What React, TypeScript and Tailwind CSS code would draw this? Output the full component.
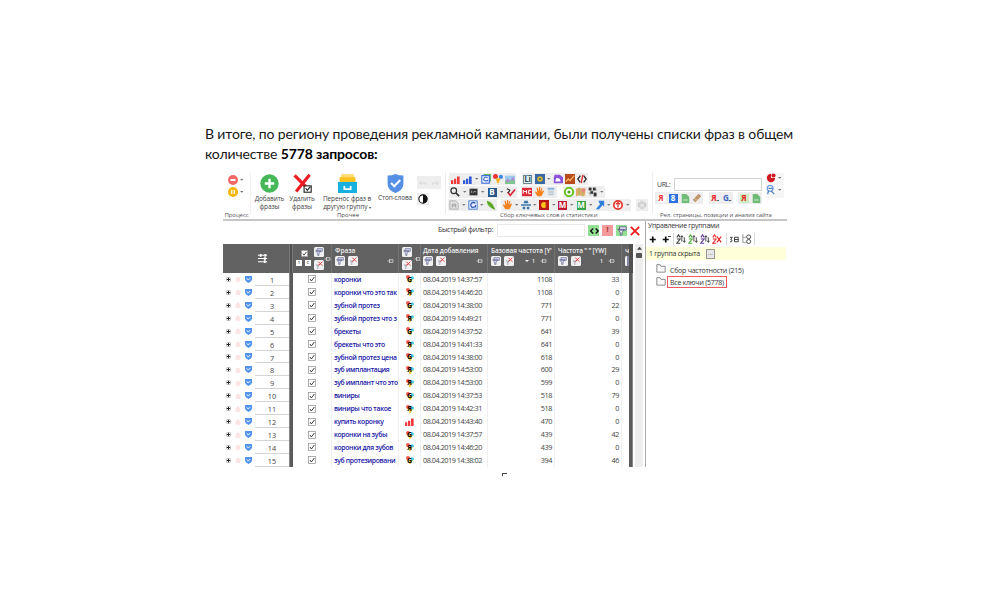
import React from 'react';

type Kids = { children?: React.ReactNode; className?: string };

const rows: [string, string, string, string, string][] = [
  ['коронки', 'G', '14:37:57', '1108', '33'],
  ['коронки что это так', 'Я', '14:46:20', '1108', '0'],
  ['зубной протез', 'G', '14:38:00', '771', '22'],
  ['зубной протез что з', 'Я', '14:49:21', '771', '0'],
  ['брекеты', 'G', '14:37:52', '641', '39'],
  ['брекеты что это', 'Я', '14:41:33', '641', '0'],
  ['зубной протез цена', 'G', '14:38:00', '618', '0'],
  ['зуб имплантация', 'Я', '14:53:00', '600', '29'],
  ['зуб имплант что это', 'Я', '14:53:00', '599', '0'],
  ['виниры', 'G', '14:37:53', '518', '79'],
  ['виниры что такое', 'Я', '14:42:31', '518', '0'],
  ['купить коронку', 'bars', '14:43:40', '470', '0'],
  ['коронки на зубы', 'G', '14:37:57', '439', '42'],
  ['коронки для зубов', 'Я', '14:46:20', '439', '0'],
  ['зуб протезировани', 'G', '14:38:02', '394', '46'],
];

const Svg = ({ children, className = 'size-[10px]' }: Kids) => (
  <svg viewBox="0 0 12 12" className={`block shrink-0 ${className}`} fill="none">{children}</svg>
);
const Slot = ({ children }: Kids) => <span className="flex w-3 shrink-0 items-center justify-center">{children}</span>;
const Caret = () => (
  <span className="flex w-[6.5px] shrink-0 items-center justify-center">
    <Svg className="size-[3.5px]"><path d="M0 3h12L6 9z" fill="#777" /></Svg>
  </span>
);
const Group = ({ children, className = '' }: Kids) => (
  <div className={`flex h-[12px] items-center bg-[#eeeeee] ${className}`}>{children}</div>
);
const Letter = ({ children, className = '' }: Kids) => (
  <span className={`flex size-[9px] items-center justify-center text-[8px] leading-none font-bold ${className}`}>{children}</span>
);
const Bars = ({ color = '#f03a3a' }: { color?: string }) => (
  <Svg className="size-[9px]"><path d="M0 12V7h3v5zM4 12V5h3v7zM8 12V2h3.5v10z" fill={color} /></Svg>
);
const Hand = () => (
  <Svg><path d="M4 11L1 6l1-1 2 2-1-6h1.5L6 5V0h1.5v5L9 1l1 .5L9 6l2-2 1 1-3 6z" fill="#f58220" /></Svg>
);
const Page = ({ color = '#6dbb74' }: { color?: string }) => (
  <Svg className="size-[9px]"><path d="M1 0h6l4 4v8H1z" fill={color} /><path d="M3 8h6" stroke="#d8f4dc" strokeWidth="1.2" /></Svg>
);
const Shield = ({ className = '' }: Kids) => (
  <Svg className={className}>
    <path d="M1 1Q4 1 6 0q2 1 5 1v5c0 3-2 5-5 6-3-1-5-3-5-6z" fill="#5590e4" />
    <path d="M3.2 5.7l2 2L9 3.8" stroke="white" strokeWidth="1.3" />
  </Svg>
);
const RowShield = () => (
  <Svg className="size-[7px]">
    <path d="M0 0h12v6q0 3-6 6-6-3-6-6z" fill="#5193ef" />
    <path d="M3 4l2.5 3L9 3.5" stroke="white" strokeWidth="1.6" />
  </Svg>
);
const Sep = ({ className = '' }: Kids) => <div className={`w-px shrink-0 bg-[#d8d8d8] ${className}`} />;

const Funnel = () => (
  <span className="flex size-[10px] shrink-0 items-center justify-center rounded-[1.5px] bg-[#f0f0f0]">
    <Svg className="size-[8px]"><path d="M3 1h8v4H3zM1 4h8L6 8v3H4V8z" fill="#d5d8f3" stroke="#62658a" strokeWidth="1" /></Svg>
  </span>
);
const FunnelOff = () => (
  <span className="flex size-[10px] shrink-0 items-center justify-center rounded-[1.5px] bg-[#f0f0f0]">
    <Svg className="size-[8px]"><path d="M1 5h7L5 9v3H3V9z" fill="#b9bbc6" /><path d="M5 1l6 6M11 1L5 7" stroke="#e84040" strokeWidth="1.5" /></Svg>
  </span>
);
const Pin = ({ className = '' }: Kids) => (
  <Svg className={`h-[6px] w-[7px] ${className}`}><path d="M0 6h4M4 2v8M4 3.5h7v5H4" stroke="#e0e0e0" strokeWidth="1.5" /></Svg>
);
const Check = ({ className = 'size-[8px]' }: Kids) => (
  <Svg className={className}><rect x=".6" y=".6" width="10.8" height="10.8" fill="white" stroke="#888" /><path d="M3 6l2 3 4.5-6" stroke="#333" strokeWidth="1.4" /></Svg>
);

function IconRows() {
  return (
    <div className="flex flex-col">
      <div className="flex pl-[3px]">
        <Group>
          <Slot><Bars /></Slot><Slot><Bars color="#2f59d8" /></Slot><Caret />
          <Slot><Svg><path d="M3 1h8v8" stroke="#65b96a" strokeWidth="2" /><rect x="1" y="2" width="9" height="9" fill="white" stroke="#2f62d8" strokeWidth="1.3" /><path d="M8 5Q5 2 3.5 5.5T8 8V7" stroke="#3767cf" strokeWidth="1.4" /></Svg></Slot>
          <Slot><Svg><circle cx="3" cy="3" r="3" fill="#e33" /><circle cx="9.5" cy="3.5" r="2.5" fill="#3689e6" /><path d="M3 5h6L7 11H5z" fill="#f6b52b" /></Svg></Slot>
          <Slot><Svg><rect y="2" width="12" height="9" fill="#9ccbf1" /><path d="M0 10l3-5 3 3 4-5 2 7z" fill="#ac8bce" /><path d="M0 8l4 2 4-3 4 2v3H0z" fill="#7fc58e" /></Svg></Slot>
        </Group>
        <Group className="ml-[6px]">
          <Slot><Letter className="border border-[#6b8792] bg-[#e2eff1] text-[7px] tracking-[-.3px] text-[#284c5a]">Li</Letter></Slot>
          <Slot><Svg><rect width="12" height="12" fill="#3868a5" /><circle cx="6" cy="6" r="3.3" fill="#d7b42e" /><circle cx="6" cy="6" r="1.3" fill="#476c70" /></Svg></Slot><Caret />
          <Slot><Svg><path d="M2 1h6l4 3v7H1V4z" fill="#8b54d9" /><path d="M3 8q0-4 3-3 3 0 3 4H3z" fill="white" /></Svg></Slot>
          <Slot><Svg><rect width="12" height="12" fill="#b94a1c" /><path d="M1 9l3-3 2 2 5-6" stroke="#ffbc66" strokeWidth="1.5" /></Svg></Slot>
          <Slot><Svg><path d="M4 2L1 6l3 4M8 2l3 4-3 4" stroke="#222" strokeWidth="1.5" /><path d="M7 1L5 11" stroke="#e12c2c" strokeWidth="1.6" /></Svg></Slot>
        </Group>
      </div>
      <div className="mt-[1px] flex pl-[3px]">
        <Group>
          <Slot><Svg><circle cx="4.5" cy="4.5" r="3.4" stroke="#333" strokeWidth="1.5" /><path d="M7 7l4 4" stroke="#333" strokeWidth="2" /></Svg></Slot><Caret />
          <Slot><Svg className="h-[8px] w-[9px]"><rect y="1" width="12" height="10" fill="#333" /><path d="M2 4l2 1.5L2 7M5 7l3-2 2 1" stroke="#ddd" /></Svg></Slot><Caret />
          <Slot><Letter className="bg-[#28578c] text-[8px] text-white">B</Letter></Slot><Caret />
          <Slot><Svg><path d="M2 6l3 4 6-7" stroke="#d4253b" strokeWidth="2" /><path d="M1 2l4 2M5 4l-3 3" stroke="#333" strokeWidth="1.4" /></Svg></Slot>
        </Group>
        <Group className="ml-[4px]">
          <Slot><Svg><rect y="1" width="12" height="10" fill="#df2936" /><path d="M1.500 8V4l2 2 2-2v4M11 4H8v4h3" stroke="white" strokeWidth="1.2" /></Svg></Slot>
          <Slot><Hand /></Slot>
          <Slot><Svg><rect x="2" y="1" width="8" height="10" fill="#dfe5ea" /><path d="M2 2h8" stroke="#7eb0d9" strokeWidth="2" /><path d="M3 5h6M3 7h6M3 9h6" stroke="#b5bec6" /></Svg></Slot>
        </Group>
        <Group className="ml-[6px]">
          <Slot><Svg><circle cx="6" cy="6" r="5" fill="white" stroke="#67c31d" strokeWidth="2.3" /><circle cx="6" cy="6" r="1.8" fill="#48a51d" /></Svg></Slot>
          <Slot><Svg><path d="M0 2l4-1 4 1 3-1v9l-3 1-4-1-4 1z" fill="#e3ac69" /><path d="M4 1v9M8 2v9" stroke="#9bb85e" /><circle cx="9" cy="4" r="2.5" fill="#e68a7d" /></Svg></Slot>
          <Slot><Svg><path d="M1 1h3v3H1zM6 1h3v3H6zM3 5h3v3H3zM7 7h3v4H7zM1 6l2 4M9 3l2 1" fill="#333" stroke="#444" strokeWidth=".5" /></Svg></Slot><Caret />
        </Group>
      </div>
      <div className="mt-px flex pl-[2px]">
        <Group>
          <Slot><Svg><path d="M1 1h7l3 3v7H1z" stroke="#aaa" fill="#e1e1e1" /><path d="M4 9V5h4v4M4 7h4" stroke="#999" /></Svg></Slot><Caret />
          <Slot><Svg><rect x="1" y="1" width="10" height="10" fill="#eaf0ff" stroke="#386fd0" /><path d="M9 4Q6 2 4 4t1 5l4-1V6" stroke="#315cbb" strokeWidth="1.5" /></Svg></Slot><Caret />
          <Slot><Svg><path d="M1 1q5 1 7 4t3 7Q1 9 1 1" fill="#69b82f" /><path d="M2 2l8 9" stroke="#3e8920" /></Svg></Slot>
        </Group>
        <Group className="ml-[4px]">
          <Slot><Hand /></Slot><Caret />
          <Slot><Svg><path d="M3 4l1-3h4l1 3zM0 5h12v2H0zM2 8h3v3H2zM7 8h3v3H7z" fill="#3d79ad" /></Svg></Slot><Caret />
          <Slot><Svg><rect width="12" height="12" fill="#b41616" /><circle cx="6" cy="6" r="3.5" fill="#ffc21b" /><path d="M8 2h4v8H8z" fill="#bf1d17" /></Svg></Slot><Caret />
          <Slot><Letter className="bg-[#bd1731] text-white">M</Letter></Slot><Caret />
          <Slot><Letter className="bg-[#36a545] text-white">M</Letter></Slot><Caret />
          <Slot><Svg><path d="M4 1h7v7L9 6l-4 5H1l5-6z" fill="#2d80dc" /></Svg></Slot><Caret />
          <Slot><Svg><circle cx="6" cy="6" r="5" fill="white" stroke="#e33429" strokeWidth="2" /><path d="M6 9V3M3.500 5L6 3l2.500 2" stroke="#e33429" strokeWidth="1.5" /></Svg></Slot><Caret />
        </Group>
        <Group className="ml-[5px]">
          <Slot><Svg><rect x="1" y="3" width="10" height="6" rx="2" fill="#c9c9c9" /><path d="M4 1h4v10H4z" fill="#d4d4d4" /><path d="M3 5h6v3H3z" fill="#e6e6e6" /></Svg></Slot>
        </Group>
      </div>
    </div>
  );
}

function Toolbar() {
  return (
    <div className="flex h-[49px] border-b-2 border-[#c6c6c6] text-[6.5px] leading-[8px] text-[#444]">
      <div className="flex w-[27px] flex-col pt-[3px]">
        <div className="flex pl-[5px]"><Svg><circle cx="6" cy="6" r="6" fill="#f26767" /><path d="M3 6h6" stroke="white" strokeWidth="2.4" /></Svg><span className="flex items-center"><Caret /></span></div>
        <div className="mt-[2px] flex pl-[5px]"><Svg><circle cx="6" cy="6" r="6" fill="#f5b70d" /><path d="M4.5 3.500v5M7.500 3.500v5" stroke="white" strokeWidth="1.5" /></Svg><span className="flex items-center"><Caret /></span></div>
        <span className="mt-auto self-center text-[6px] tracking-[-.05px] text-[#555]">Процесс</span>
      </div>
      <Sep className="h-[42px] bg-[#f2f2f2]" />
      <div className="flex w-[194px] flex-col">
        <div className="flex h-[39px]">
          <div className="flex w-[37px] flex-col items-center pt-[2px] text-center">
            <Svg className="size-[19px]"><circle cx="6" cy="6" r="5.8" fill="#46b858" /><path d="M6 3v6M3 6h6" stroke="white" strokeWidth="1.5" /></Svg>
            <span className="mt-[2px] whitespace-nowrap tracking-[-.12px]">Добавить<br />фразы</span>
          </div>
          <div className="flex w-[28px] flex-col items-center pt-[2px] text-center">
            <Svg className="size-[19px]"><path d="M1 .8l9 9M10.5.5L2 11" stroke="#ed1c24" strokeWidth="2" /><rect x="7" y="7.500" width="4.500" height="4" fill="white" stroke="#222" strokeWidth=".7" /><path d="M8 9l1 1.300L11 8" stroke="#222" strokeWidth=".7" /></Svg>
            <span className="mt-[2px] tracking-[-.12px]">Удалить<br />фразы</span>
          </div>
          <div className="flex w-[62px] flex-col items-center pt-[2px] text-center">
            <Svg className="size-[19px]"><path d="M2 0h8v5H2z" fill="#ffdc78" /><path d="M1 2h10v3H1z" fill="#fbc31c" /><path d="M0 5h12v7H0z" fill="#18b1df" /><path d="M4 7.500v2h4v-2" stroke="white" strokeWidth="1.1" /></Svg>
            <span className="mt-[2px] whitespace-nowrap tracking-[-.1px]">Перенос фраз в<br />другую группу <span className="text-[4px]">▾</span></span>
          </div>
          <div className="flex w-[34px] flex-col items-center pt-[2px]">
            <Shield className="size-[19px]" />
            <span className="mt-[1px] whitespace-nowrap tracking-[-.12px]">Стоп-слова</span>
          </div>
          <div className="flex w-[33px] flex-col pt-[4px] pl-[5px]">
            <div className="flex h-[13px] w-[24px] items-center justify-around bg-[#eeeeee]">
              <Svg className="size-[8px]"><path d="M4 3L1 6l3 3M1 6h9v3" stroke="#cfcfcf" /></Svg><Svg className="size-[8px]"><path d="M8 3l3 3-3 3M11 6H2v3" stroke="#cfcfcf" /></Svg>
            </div>
            <div className="mt-[4px] flex size-[12px] items-center justify-center bg-[#eeeeee]"><Svg><circle cx="6" cy="6" r="5" fill="white" stroke="#111" strokeWidth="1.3" /><path d="M6 1a5 5 0 010 10z" fill="#111" /></Svg></div>
          </div>
        </div>
        <span className="pl-[86px] text-[6px]">Прочее</span>
      </div>
      <Sep className="h-[42px] bg-[#eeeeee]" />
      <div className="flex w-[206px] flex-col pt-[1px]">
        <IconRows />
        <span className="pl-[54px] text-[6px] tracking-[-.08px] whitespace-nowrap text-[#555]">Сбор ключевых слов и статистики</span>
      </div>
      <Sep className="h-[42px] bg-[#eeeeee]" />
      <div className="flex w-[133px] flex-col pt-[6px] pl-[4px]">
        <div className="flex"><span className="w-[17px] pt-[3px] text-[7px] tracking-[-.45px]">URL:</span><div className="h-[13px] w-[88px] border border-[#d4d4d4] bg-white" />
          <div className="-mt-[5px] ml-[4px] flex h-[25px] w-[18px] flex-col gap-[2px] bg-[#f6f6f6]">
            <span className="flex"><Svg><path d="M6 1a5 5 0 105 5H6z" fill="#cf1a22" /><circle cx="9" cy="3" r="2.500" fill="#cf1a22" /></Svg><span className="pt-[3px]"><Caret /></span></span>
            <span className="flex"><Svg><circle cx="5" cy="4" r="3.500" stroke="#6c9ce0" strokeWidth="1.500" /><path d="M3 4h5M6 7l4 4M3 7l-1 4" stroke="#517ebd" strokeWidth="1.500" /></Svg><span className="pt-[3px]"><Caret /></span></span>
          </div>
        </div>
        <div className="-mt-[6px] flex">
          <Group className="-ml-[2px]">
            <Slot><Letter className="rounded-full bg-white text-[#e73535]">Я</Letter></Slot><Slot><Letter className="bg-[#2d71df] text-white">8</Letter></Slot><Slot><Page /></Slot><Slot><Svg><path d="M1 8l7-7 3 3-7 7z" fill="#bd956b" /><path d="M3 6l3 3" stroke="#ead3ba" /></Svg></Slot>
          </Group>
          <Group className="ml-[6px]"><Slot><Letter className="text-[#e42626]">Я<span className="self-end text-[3px] text-black">••</span></Letter></Slot><Slot><Letter className="text-[#3e66c7]">G<span className="self-end text-[3px] text-black">••</span></Letter></Slot></Group>
          <Group className="ml-[5px]"><Slot><Letter className="bg-[#cee9bd] text-[#e42626]">Я</Letter></Slot><Slot><Page /></Slot></Group>
        </div>
        <span className="mt-auto pl-[3px] text-[6px] tracking-[-.12px] whitespace-nowrap text-[#555]">Рел. страницы, позиции и анализ сайта</span>
      </div>
    </div>
  );
}

const Tools = ({ children }: Kids) => <div className="mt-[1px] flex items-center gap-[3px]"><Funnel /><FunnelOff />{children}</div>;

function TableHeader() {
  return (
    <div className="flex h-[29px] bg-[#626262] text-[6.5px] leading-[8px] font-semibold text-[#f0f0f0]">
      <div className="flex w-[66px] items-center justify-center pl-[12px]"><Svg className="size-[11px]"><path d="M1 2.500h10M1 6h10M1 9.500h10" stroke="white" strokeWidth="1.200" /><path d="M4 1v3M8.500 4.500v3M8.500 8v3M9 1v3" stroke="white" strokeWidth="2" /></Svg></div>
      <div className="w-[4px] border-x border-[#777] bg-[#505050]" />
      <div className="flex w-[38px]">
        <div className="flex w-[18px] flex-col items-end gap-[3px] pt-[6px]">
          <Check className="mr-[3px] size-[7px]" />
          <div className="flex gap-[3px] text-[4px] leading-[6px] text-[#333]"><span className="size-[6px] bg-white text-center">1</span><span className="size-[6px] bg-white text-center">C</span></div>
        </div>
        <div className="ml-[2px] flex flex-col gap-[3px] pt-[3px] pl-[1px]"><Funnel /><FunnelOff /></div>
        <Pin className="mt-[12px]" />
      </div>
      <div className="flex w-[67px] flex-col border-l border-[#737373] pt-[3px] pl-[3px]"><span>Фраза</span><Tools><Pin className="ml-[26px]" /></Tools></div>
      <div className="flex w-[22px] border-l border-[#737373] pl-[3px]"><div className="flex flex-col gap-[3px] pt-[3px]"><Funnel /><FunnelOff /></div><Pin className="mt-[12px] ml-[2px]" /></div>
      <div className="flex w-[67px] flex-col border-l border-[#737373] pt-[3px] pl-[2px]"><span className="tracking-[-.1px]">Дата добавления</span><Tools><Pin className="ml-[27px]" /></Tools></div>
      <div className="flex w-[67px] flex-col border-l border-[#737373] pt-[3px] pl-[3px]"><span className="tracking-[-.12px] whitespace-nowrap">Базовая частота [Y'</span><Tools><span className="ml-[8px]"><Svg className="size-[4px]"><path d="M0 3h12L6 9z" fill="white" /></Svg></span><span className="text-[5px]">1</span><Pin className="ml-[2px]" /></Tools></div>
      <div className="flex w-[67px] flex-col border-l border-[#737373] pt-[3px] pl-[3px]"><span className="tracking-[-.18px] whitespace-nowrap">Частота " " [YW]</span><Tools><span className="ml-[16px] text-[5px]">1</span><Pin className="ml-[2px]" /></Tools></div>
      <div className="flex w-[8px] flex-col overflow-hidden border-l border-[#737373] pt-[3px] pl-[3px]"><span className="w-[4px]">ч</span><div className="mt-px h-[10px] w-[4px] rounded-l-[1.5px] border-l-2 border-[#f0f0f0] bg-[#8587a0]" /></div>
      <div className="w-[4px] bg-[#505050]" />
    </div>
  );
}

function Source({ name }: { name: string }) {
  if (name === 'bars') return <Bars />;
  return (
    <span className="grid size-[8px] place-items-center">
      <Svg className="col-start-1 row-start-1 size-[8px]"><circle cx="3" cy="3" r="3" fill="#f35b50" /><circle cx="9.500" cy="4.500" r="2.500" fill="#48cbe0" /><path d="M3 6h7l-3 6H5z" fill="#f9cf3d" /></Svg>
      <span className="col-start-1 row-start-1 text-[7px] leading-none font-bold text-black">{name}</span>
    </span>
  );
}

function TableRow({ row, index }: { row: (typeof rows)[number]; index: number }) {
  const [phrase, src, time, base, freq] = row;
  return (
    <div className="flex h-[12.93px] items-center text-[7.3px] leading-[13px] text-[#444]">
      <div className="flex h-full w-[66px] items-center">
        <div className="flex w-[32px] items-center gap-[4px] pl-[3px]">
          <Svg className="size-[5px]"><rect x="1" y="1" width="10" height="10" rx="3" stroke="#999" strokeWidth="1.500" /><path d="M6 2v8M2 6h8" stroke="#222" strokeWidth="2.400" /></Svg>
          <Svg className="size-[6px]"><path d="M2 5h8v6H2zM4 5V2h4v3" fill="#fde5e5" stroke="#fae0e0" strokeWidth="1.200" /></Svg>
          <RowShield />
        </div>
        <span className="h-full flex-1 border-b border-[#d4d4d4] text-center leading-[14px]">{index + 1}</span>
      </div>
      <div className="h-full w-[4px] border-l border-[#888] bg-[#5b5b5b]" />
      <div className="flex w-[38px] justify-center"><Check /></div>
      <div className="h-full w-[67px] border-l border-[#f0f0f0] pl-[2px]"><div className="w-[64px] text-[6.8px] font-semibold tracking-[-.32px] whitespace-nowrap text-[#2015a5]">{phrase}</div></div>
      <div className="flex h-full w-[22px] items-center justify-center border-l border-[#f0f0f0]"><Source name={src} /></div>
      <div className="h-full w-[67px] border-l border-[#f0f0f0] pl-[2px] tracking-[-.48px] whitespace-nowrap">08.04.2019 {time}</div>
      <div className="h-full w-[67px] border-l border-[#f0f0f0] pr-[2px] text-right tracking-[-.4px]">{base}</div>
      <div className="h-full w-[67px] border-l border-[#f0f0f0] pr-[2px] text-right tracking-[-.4px]">{freq}</div>
      <div className="h-full w-[8px] border-l border-[#f0f0f0]" />
      <div className="h-full w-[4px] border-r border-[#888] bg-[#5b5b5b]" />
    </div>
  );
}

function Groups() {
  return (
    <div className="w-[141px] border-l border-[#aaa] text-[7px] leading-[9px] text-[#333]">
      <div className="h-[10px] pl-[2px] tracking-[-.28px]">Управление группами</div>
      <div className="flex h-[16px] items-center gap-[2px] pl-[3px]">
        <Svg className="size-[9px]"><path d="M5 2v8M1 6h8" stroke="#111" strokeWidth="2.300" /></Svg>
        <Svg className="ml-[2px] size-[9px]"><path d="M5 2v8M1 6h8" stroke="#111" strokeWidth="2.300" /><path d="M8 2h4" stroke="#111" /></Svg>
        <Sep className="h-[12px]" />
        {['#444', '#49ad38', '#633c9f', '#e33'].map((color, i) => (
          <Svg key={color} className="size-[10px]"><path d="M1 4l2-3 2 3M1 6h4L1 11h4" stroke={color} strokeWidth="1.300" />{i === 3 ? <path d="M6 3l5 7M11 3l-5 7" stroke="#e22" strokeWidth="1.500" /> : <path d="M7 9V2M5.500 4L7 2l1.500 2M10 4v6M8.500 8l1.500 2 1.500-2" stroke="#333" />}</Svg>
        ))}
        <Sep className="ml-[2px] h-[12px]" />
        <Svg className="ml-[1px] size-[9px]"><path d="M0 3h3L1 6q3 0 1 3H0M6 3h5v6H6zM6 6h5" stroke="#333" strokeWidth="1.200" /></Svg>
        <Svg className="ml-[1px] size-[10px]"><path d="M1 0v10h4M1 4h4" stroke="#888" /><circle cx="8" cy="3.500" r="2.400" stroke="#333" /><circle cx="8" cy="9" r="2.400" stroke="#333" /></Svg>
        <Sep className="h-[12px]" />
      </div>
      <div className="flex h-[13px] items-center bg-[#ffffd9] pl-[3px]"><span className="tracking-[-.26px]">1 группа скрыта</span><span className="ml-[6px] flex h-[10px] w-[9px] items-center justify-center border border-[#999] bg-[#e7e7e7] text-[6px]">...</span></div>
      <div className="flex flex-col pt-[2px] pl-[10px]">
        {['Сбор частотности (215)', 'Все ключи (5778)'].map((label, i) => (
          <div key={label} className="flex h-[13px] items-center tracking-[-.24px]">
            <Svg className="mb-[2px] size-[10px]"><path d="M1 2h4l1 2h5v7H1z" stroke="#777" fill="#fafafa" /></Svg>
            <span className={i === 0 ? 'ml-[4px] pt-[3px]' : 'mt-[1px] ml-px flex h-[12px] items-center border border-[#ef5a60] px-[2px] whitespace-nowrap'}>{label}</span>
          </div>
        ))}
      </div>
    </div>
  );
}

export default function App() {
  return (
    <main className="flex h-[600px] w-[1000px] flex-col overflow-hidden bg-white pt-[124px] pl-[205px]">
      <p className="h-[48px] w-[620px] font-[Lato,sans-serif] text-[14px] leading-[20px] whitespace-nowrap text-[#171717]">
        <span className="tracking-[-.13px]">В итоге, по региону проведения рекламной кампании, были получены списки фраз в общем</span><br />
        <span className="tracking-[-.13px]">количестве <b className="text-black">5778 запросов:</b></span>
      </p>
      <section className="ml-[18px] w-[564px] font-['Open_Sans',sans-serif]">
        <Toolbar />
        <div className="flex h-[246px]">
          <div className="w-[422px]">
            <div className="flex h-[23px] items-center pb-[4px] pl-[215px] text-[7px]">
              <span className="w-[59px] whitespace-nowrap tracking-[-.28px] text-[#333]">Быстрый фильтр:</span>
              <div className="h-[13px] w-[88px] border border-[#e9e9e9]" />
              <div className="flex h-[13px] items-center gap-[3px] pl-[3px]">
                <span className="flex size-[11px] items-center justify-center bg-[#93df93]"><Svg><path d="M5 3L2 6l3 3M8 3l3 3-3 3" stroke="#111" strokeWidth="1.700" /></Svg></span>
                <span className="flex size-[11px] items-center justify-center bg-[#f39a9a] font-bold text-[#9c2828]">!</span>
                <span className="flex size-[11px] items-center justify-center bg-[#93df93]"><Svg><path d="M3 1h8v4H3zM1 4h8L6 8v3H4V8z" fill="#e5e6ff" stroke="#555878" /></Svg></span>
                <Svg><path d="M1 1l10 10M11 1L1 11" stroke="#ed2020" strokeWidth="2.300" /></Svg>
              </div>
            </div>
            <div className="flex">
              <div className="w-[410px] shrink-0"><TableHeader />{rows.map((row, i) => <TableRow key={i} row={row} index={i} />)}</div>
              <div className="ml-[2px] flex h-[223px] w-[8px] flex-col items-center bg-[#eeeeee] pt-[2px]"><Svg className="size-[5px]"><path d="M0 9l6-7 6 7z" fill="#444" /></Svg><div className="mt-[2px] h-[5px] w-[6px] rounded-[1px] bg-[#555]" /></div>
            </div>
          </div>
          <Groups />
        </div>
      </section>
      <div className="mt-[6px] ml-[297px] h-[3px] w-[5px] border-t border-l border-[#444]" />
    </main>
  );
}
